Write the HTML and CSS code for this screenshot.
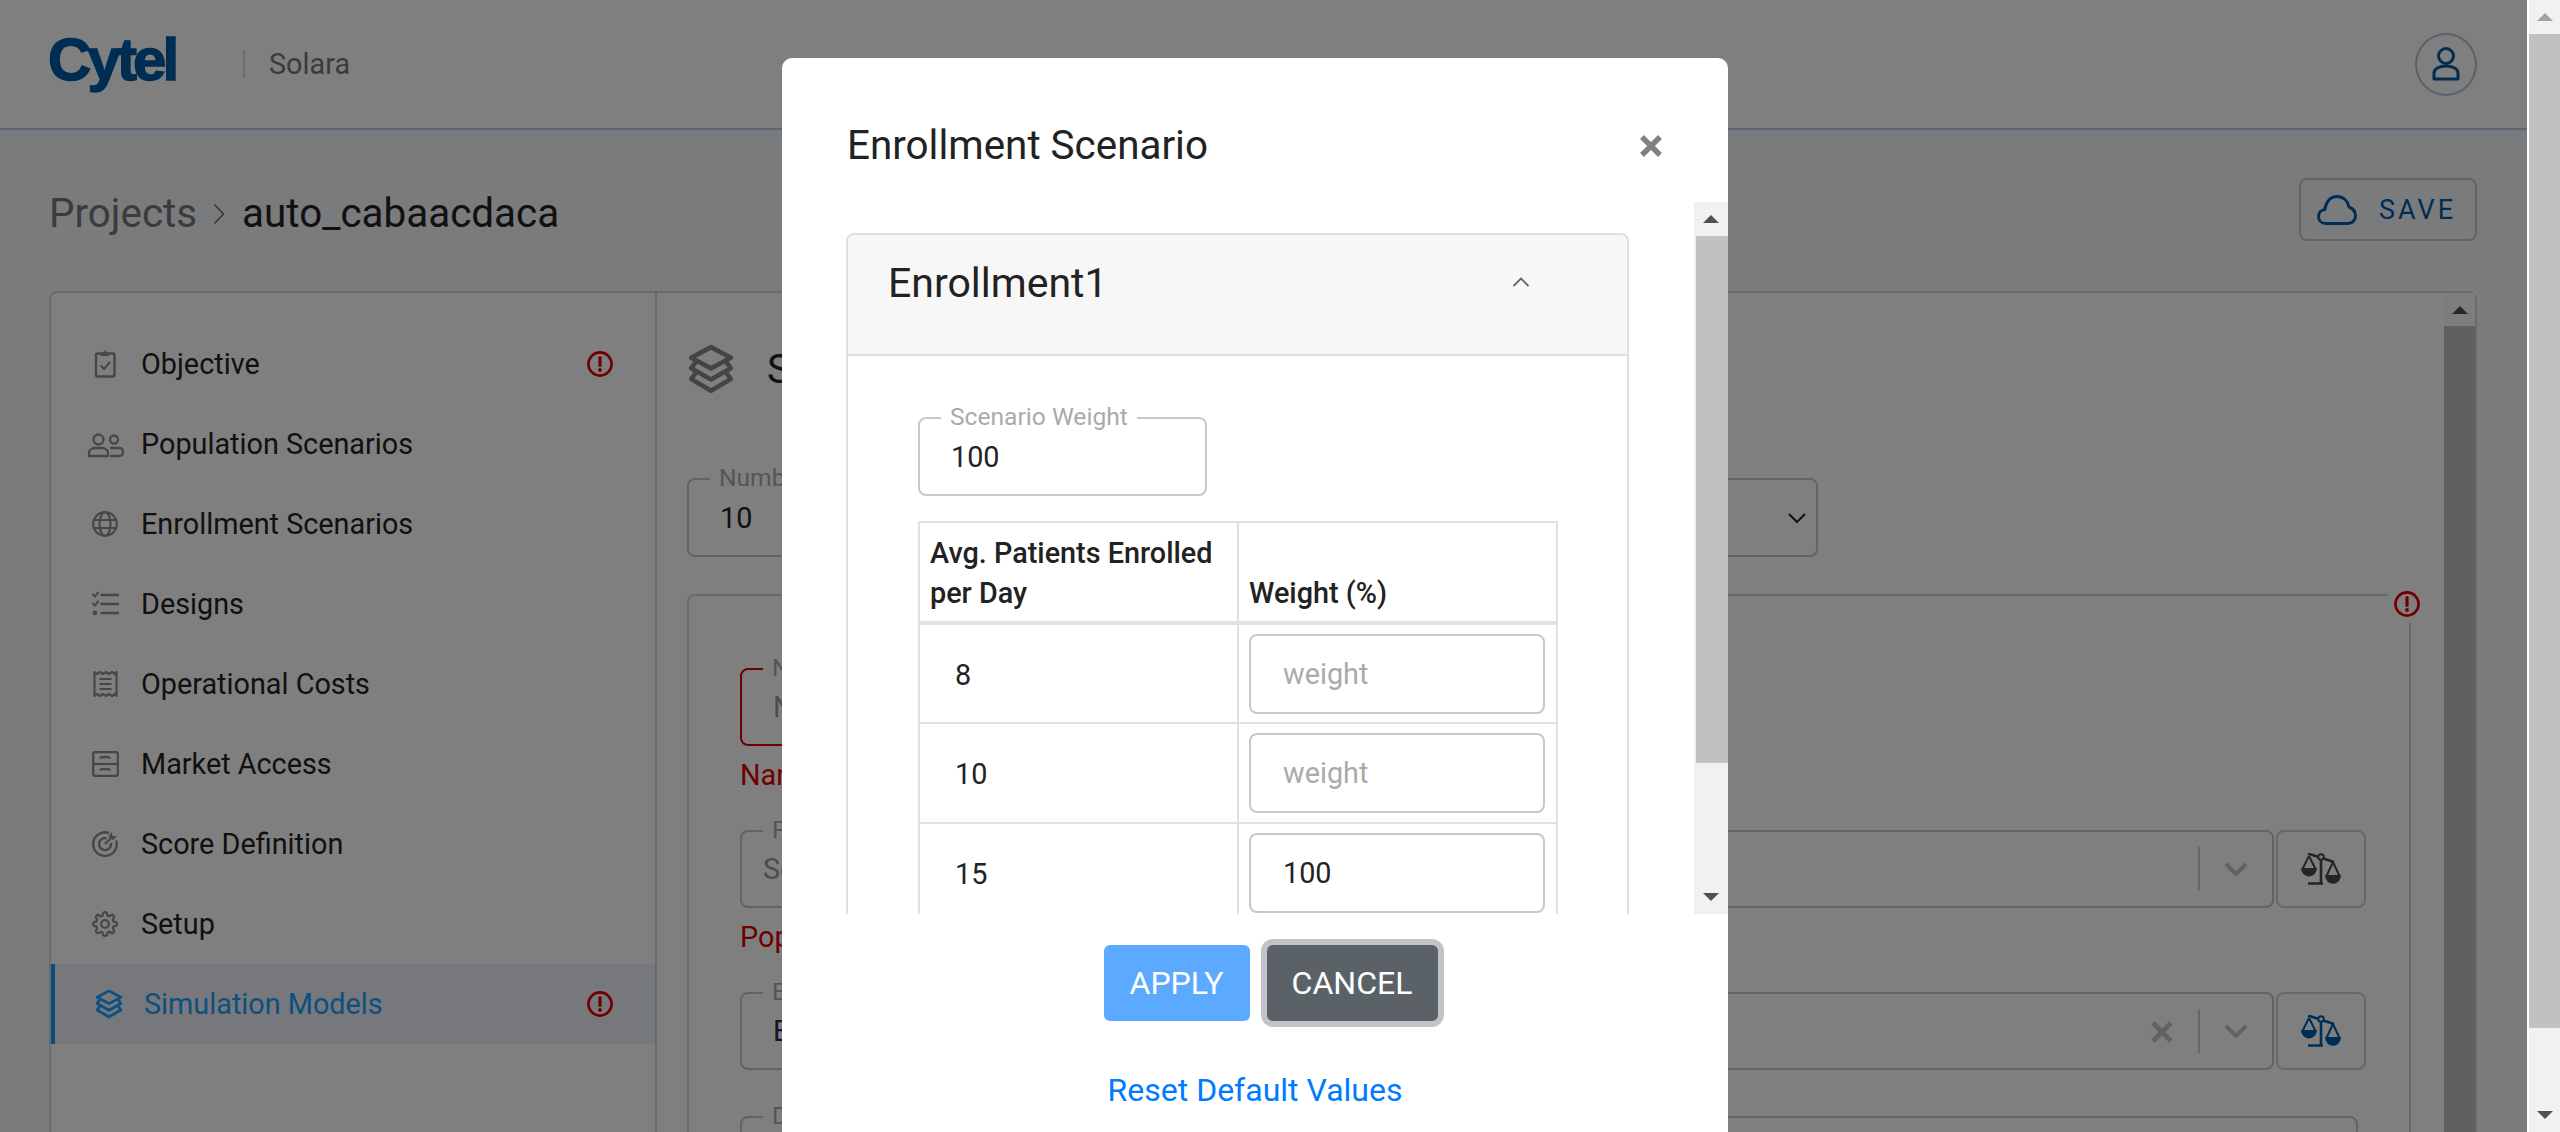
FILE: index.html
```html
<!DOCTYPE html>
<html>
<head>
<meta charset="UTF-8">
<title>Solara</title>
<link rel="stylesheet" href="styles.css">
</head>
<body>

<svg class="sprites" width="0" height="0">
	<symbol id="i-alert" viewBox="0 0 26 26">
		<circle cx="13" cy="13" r="11.6" fill="none" stroke="currentColor" stroke-width="2.6"/>
		<path d="M13 6.5v8" fill="none" stroke="currentColor" stroke-width="3.2" stroke-linecap="round"/>
		<circle cx="13" cy="19" r="1.9" fill="currentColor"/>
	</symbol>
	<symbol id="i-stack" viewBox="0 0 24 24">
		<g fill="none" stroke="currentColor" stroke-width="2.2" stroke-linejoin="round" stroke-linecap="round">
			<path d="M12 1.5 21.5 6.6 12 11.7 2.5 6.6Z"/>
			<path d="M5 8.2 2.5 11.6 12 17 21.5 11.6 19 8.2"/>
			<path d="M5 13.4 2.5 16.8 12 22.4 21.5 16.8 19 13.4"/>
		</g>
	</symbol>
	<symbol id="i-scale" viewBox="0 0 40 32">
		<g fill="none" stroke="currentColor" stroke-width="2">
			<path d="M20 5V30M7 30.5H22" stroke-width="2.6"/>
			<path d="M7 .5 33 9" stroke-width="2.6"/>
			<circle cx="20" cy="4" r="2.8" fill="#fff"/>
			<path d="M8 3 1.5 16M8 3 14.5 16"/>
			<path d="M32 9 25.5 23M32 9 38.5 23"/>
		</g>
		<path d="M0 15H16A8 8.5 0 0 1 0 15Z" fill="currentColor"/>
		<path d="M24 22H40A8 8.8 0 0 1 24 22Z" fill="currentColor"/>
	</symbol>
	<symbol id="i-chev" viewBox="0 0 24 14">
		<path d="M2 2 12 12 22 2" fill="none" stroke="currentColor" stroke-width="4"/>
	</symbol>
	<symbol id="i-x" viewBox="0 0 20 20">
		<path d="M2.5 2.5 17.5 17.5M17.5 2.5 2.5 17.5" fill="none" stroke="currentColor" stroke-width="4.2"/>
	</symbol>
</svg>

<div class="page">

	<header class="topbar">
		<span class="logo">Cytel</span>
		<span class="app-name">Solara</span>
		<span class="avatar">
			<svg viewBox="0 0 28 34" width="28" height="34">
				<circle cx="14" cy="9" r="7.5" fill="none" stroke="currentColor" stroke-width="3"/>
				<path d="M2 32V26C2 22 7 19 14 19S26 22 26 26V32Z" fill="none" stroke="currentColor" stroke-width="3" stroke-linejoin="round"/>
			</svg>
		</span>
	</header>

	<div class="crumbs">
		<span class="crumb-root">Projects</span>
		<svg class="crumb-sep" viewBox="0 0 12 22" width="12" height="22"><path d="M1.5 1.5 10.5 11 1.5 20.5" fill="none" stroke="currentColor" stroke-width="1.8"/></svg>
		<span class="crumb-name">auto_cabaacdaca</span>
		<button class="save-btn">
			<svg viewBox="0 0 40 30" width="40" height="30"><path d="M9 28.5C4 28.5 1.5 25 1.5 21.5S4 15 8 14.5C8.5 7 13.5 1.5 20 1.5S31 6 32 12C36 13.5 38.5 17 38.5 21S35.5 28.5 31 28.5Z" fill="none" stroke="currentColor" stroke-width="3" stroke-linejoin="round"/></svg>
			<span>SAVE</span>
		</button>
	</div>

	<div class="panel">
		<nav class="sidenav">
			<a class="nav-item">
				<svg class="nav-icon" viewBox="0 0 26 26">
					<rect x="4" y="2.5" width="18.5" height="23" rx="1.5" fill="none" stroke="currentColor" stroke-width="2.4"/>
					<path d="M9 5V1.5H11L13 -1 15 1.5H17V5Z" fill="currentColor"/>
					<path d="M8.5 14.5 12 18 18 11" fill="none" stroke="currentColor" stroke-width="2.2"/>
				</svg>
				<span>Objective</span>
				<svg class="nav-alert"><use href="#i-alert"/></svg>
			</a>
			<a class="nav-item">
				<svg class="nav-icon" viewBox="0 0 26 26">
					<g fill="none" stroke="currentColor" stroke-width="2.3">
						<circle cx="6.5" cy="8.5" r="5"/>
						<path d="M-3 25V22C-3 19 0 17 3 17H10C13 17 16 19 16 22V25Z" stroke-linejoin="round"/>
						<circle cx="22" cy="8.5" r="4"/>
						<path d="M18 17H27C30 17 31 19 31 21S30 25 27 25H18"/>
					</g>
				</svg>
				<span>Population Scenarios</span>
			</a>
			<a class="nav-item">
				<svg class="nav-icon" viewBox="0 0 26 26">
					<g fill="none" stroke="currentColor" stroke-width="2.2">
						<circle cx="13" cy="13" r="11.8"/>
						<ellipse cx="13" cy="13" rx="5.5" ry="11.8"/>
						<path d="M2 9H24M2 17H24"/>
					</g>
				</svg>
				<span>Enrollment Scenarios</span>
			</a>
			<a class="nav-item">
				<svg class="nav-icon" viewBox="0 0 26 26">
					<g fill="none" stroke="currentColor" stroke-width="2.3">
						<path d="M8.5 4H27M8.5 13H27M8.5 22H27"/>
						<path d="M.5 3 3 5.5 6.5 .8M.5 12 3 14.5 6.5 9.8" stroke-width="2"/>
					</g>
					<circle cx="3" cy="22" r="2.4" fill="currentColor"/>
				</svg>
				<span>Designs</span>
			</a>
			<a class="nav-item">
				<svg class="nav-icon" viewBox="0 0 26 26">
					<g fill="none" stroke="currentColor" stroke-width="2.2">
						<path d="M2.5 1 5 3 8 1 11 3 14 1 17 3 20 1 23 3 24.5 1V25L23 23 20 25 17 23 14 25 11 23 8 25 5 23 2.5 25Z" stroke-linejoin="round"/>
						<path d="M7.5 8H19.5M7.5 13H19.5M7.5 18H19.5"/>
					</g>
				</svg>
				<span>Operational Costs</span>
			</a>
			<a class="nav-item">
				<svg class="nav-icon" viewBox="0 0 26 26">
					<g fill="none" stroke="currentColor" stroke-width="2.3">
						<rect x="1.2" y="1.2" width="24.6" height="23.6" rx="1.5"/>
						<path d="M1 13H25"/>
						<path d="M8 7.5C8 5.5 18 5.5 18 7.5M8 19.5C8 17.5 18 17.5 18 19.5"/>
					</g>
				</svg>
				<span>Market Access</span>
			</a>
			<a class="nav-item">
				<svg class="nav-icon" viewBox="0 0 26 26">
					<g fill="none" stroke="currentColor" stroke-width="2.4">
						<path d="M17 2A11.8 11.8 0 1 0 24.2 9.5"/>
						<path d="M14.5 7.3A6 6 0 1 0 19 12"/>
						<path d="M13 13 19 7" stroke-width="2.2"/>
					</g>
					<path d="M16.5 5.5 19.5 1 20.5 5 25 5.5 21 9Z" fill="currentColor"/>
				</svg>
				<span>Score Definition</span>
			</a>
			<a class="nav-item">
				<svg class="nav-icon" viewBox="0 0 24 24">
					<g fill="none" stroke="currentColor" stroke-width="2.1">
						<circle cx="12" cy="12" r="3.6"/>
						<path d="M19.4 15a1.65 1.65 0 0 0 .33 1.82l.06.06a2 2 0 0 1 0 2.83 2 2 0 0 1-2.83 0l-.06-.06a1.65 1.65 0 0 0-1.82-.33 1.65 1.65 0 0 0-1 1.51V21a2 2 0 0 1-2 2 2 2 0 0 1-2-2v-.09A1.65 1.65 0 0 0 9 19.4a1.65 1.65 0 0 0-1.82.33l-.06.06a2 2 0 0 1-2.83 0 2 2 0 0 1 0-2.83l.06-.06a1.65 1.65 0 0 0 .33-1.82 1.65 1.65 0 0 0-1.51-1H3a2 2 0 0 1-2-2 2 2 0 0 1 2-2h.09A1.65 1.65 0 0 0 4.6 9a1.65 1.65 0 0 0-.33-1.82l-.06-.06a2 2 0 0 1 0-2.83 2 2 0 0 1 2.83 0l.06.06a1.65 1.65 0 0 0 1.82.33H9a1.65 1.65 0 0 0 1-1.51V3a2 2 0 0 1 2-2 2 2 0 0 1 2 2v.09a1.65 1.65 0 0 0 1 1.51 1.65 1.65 0 0 0 1.82-.33l.06-.06a2 2 0 0 1 2.83 0 2 2 0 0 1 0 2.83l-.06.06a1.65 1.65 0 0 0-.33 1.82V9a1.65 1.65 0 0 0 1.51 1H21a2 2 0 0 1 2 2 2 2 0 0 1-2 2h-.09a1.65 1.65 0 0 0-1.51 1z"/>
					</g>
				</svg>
				<span>Setup</span>
			</a>
			<a class="nav-item nav-active">
				<svg class="nav-icon"><use href="#i-stack"/></svg>
				<span>Simulation Models</span>
				<svg class="nav-alert"><use href="#i-alert"/></svg>
			</a>
		</nav>

		<main class="content">
			<div class="content-title">
				<svg class="title-icon"><use href="#i-stack"/></svg>
				<h2>Simulation Models</h2>
			</div>

			<div class="top-fields">
				<div class="field field-number">
					<label class="field-label">Number of Simulations</label>
					<span class="field-value">10</span>
				</div>
				<div class="field field-native">
					<label class="field-label">Simulation Type</label>
					<svg class="native-chev" viewBox="0 0 18 10" width="18" height="10"><path d="M1 1 9 9 17 1" fill="none" stroke="currentColor" stroke-width="2"/></svg>
				</div>
			</div>

			<section class="card">
				<svg class="card-alert"><use href="#i-alert"/></svg>

				<div class="field field-name field-error">
					<label class="field-label">Name</label>
					<span class="field-value field-hint">Name</span>
				</div>
				<p class="error-text">Name is required</p>

				<div class="form-row">
					<div class="field">
						<label class="field-label">Population Scenario</label>
						<span class="field-value field-select-text">Select...</span>
						<span class="select-tools">
							<svg class="tool-chev"><use href="#i-chev"/></svg>
						</span>
					</div>
					<button class="compare-btn"><svg class="scale-icon"><use href="#i-scale"/></svg></button>
				</div>
				<p class="error-text">Population Scenario is required</p>

				<div class="form-row">
					<div class="field">
						<label class="field-label">Enrollment Scenario</label>
						<span class="field-value field-chosen">Enrollment1</span>
						<svg class="tool-x"><use href="#i-x"/></svg>
						<span class="select-tools">
							<svg class="tool-chev"><use href="#i-chev"/></svg>
						</span>
					</div>
					<button class="compare-btn compare-on"><svg class="scale-icon"><use href="#i-scale"/></svg></button>
				</div>

				<div class="field field-last">
					<label class="field-label">Design</label>
				</div>
			</section>
		</main>

		<div class="panel-scroll">
			<span class="panel-scroll-btn"><i class="arrow-up"></i></span>
			<span class="panel-scroll-thumb"></span>
		</div>
	</div>

	<div class="overlay"></div>

	<div class="modal">
		<div class="modal-head">
			<h3>Enrollment Scenario</h3>
			<svg class="modal-close" viewBox="0 0 24 24" width="24" height="24"><path d="M3 3 21 21M21 3 3 21" fill="none" stroke="currentColor" stroke-width="5.4"/></svg>
		</div>

		<div class="modal-body">
			<div class="modal-scroll">
				<div class="accordion">
					<div class="accordion-head">
						<span>Enrollment1</span>
						<svg viewBox="0 0 18 10" width="18" height="10"><path d="M1.5 9 9 1.5 16.5 9" fill="none" stroke="currentColor" stroke-width="1.8"/></svg>
					</div>
					<div class="accordion-body">
						<div class="field field-weight">
							<label class="field-label">Scenario Weight</label>
							<input class="bare-input" type="text" value="100">
						</div>
						<table class="weights">
							<thead>
								<tr><th class="col-rate">Avg. Patients Enrolled per Day</th><th>Weight (%)</th></tr>
							</thead>
							<tbody>
								<tr><td class="rate">8</td><td><input class="weight-input" type="text" placeholder="weight"></td></tr>
								<tr><td class="rate">10</td><td><input class="weight-input" type="text" placeholder="weight"></td></tr>
								<tr><td class="rate">15</td><td><input class="weight-input" type="text" value="100"></td></tr>
							</tbody>
						</table>
					</div>
				</div>
			</div>
			<div class="modal-scrollbar">
				<span class="scroll-btn"><i class="arrow-up"></i></span>
				<span class="scroll-thumb"></span>
				<span class="scroll-rest"></span>
				<span class="scroll-btn"><i class="arrow-down"></i></span>
			</div>
		</div>

		<div class="modal-foot">
			<div class="modal-actions">
				<button class="btn btn-apply">APPLY</button>
				<button class="btn btn-cancel">CANCEL</button>
			</div>
			<a class="reset-link">Reset Default Values</a>
		</div>
	</div>
</div>

<div class="page-scroll">
	<span class="page-scroll-btn"><i class="arrow-up arrow-off"></i></span>
	<span class="page-scroll-thumb"></span>
	<span class="scroll-rest"></span>
	<span class="page-scroll-btn"><i class="arrow-down"></i></span>
</div>

</body>
</html>
```

FILE: styles.css
```css
*
{
	box-sizing: border-box;
}

html, body
{
	margin: 0;
	height: 100%;
	overflow: hidden;
}

body
{
	display: flex;
	width: 2560px;
	height: 1132px;
	font-family: Roboto, "Liberation Sans", sans-serif;
	color: #222222;
	background-color: #ffffff;
}

h2, h3, p
{
	margin: 0;
	font-weight: 400;
}

button
{
	font-family: inherit;
}

.sprites
{
	position: absolute;
}

.page
{
	position: relative;
	width: 2527px;
	height: 1132px;
	display: flex;
	flex-direction: column;
	overflow: hidden;
	background-color: #f5f6f9;
}

.overlay
{
	position: absolute;
	inset: 0;
	background-color: rgba(0, 0, 0, 0.5);
}

/* header */

.topbar
{
	flex: none;
	height: 130px;
	display: flex;
	align-items: center;
	padding: 0 50px 0 48px;
	background-color: #ffffff;
	border-bottom: 2px solid #b5cde6;
}

.logo
{
	width: 127px;
	margin-top: -8px;
	font-family: "Liberation Sans", sans-serif;
	font-weight: 700;
	font-size: 60px;
	line-height: 70px;
	letter-spacing: -3.9px;
	color: #005aa8;
	-webkit-text-stroke: 1.5px #005aa8;
}

.app-name
{
	margin-left: 68px;
	padding-left: 24px;
	font-size: 28.8px;
	color: #777777;
	line-height: 28px;
	border-left: 2px solid #d8d8d8;
}

.avatar
{
	margin-left: auto;
	width: 62px;
	height: 63px;
	display: flex;
	align-items: center;
	justify-content: center;
	border: 2px solid #b0c4dc;
	border-radius: 50%;
	color: #005aa8;
}

/* breadcrumb row */

.crumbs
{
	flex: none;
	height: 63px;
	margin: 48px 50px 50px 49px;
	display: flex;
	align-items: center;
}

.crumb-root
{
	margin-top: 8px;
	font-size: 40.4px;
	color: #777777;
}

.crumb-sep
{
	margin: 8px 17px 0 16px;
	color: #777777;
}

.crumb-name
{
	margin-top: 8px;
	font-size: 40.4px;
	color: #222222;
}

.save-btn
{
	margin-left: auto;
	width: 178px;
	height: 63px;
	display: flex;
	align-items: center;
	gap: 22px;
	padding: 0 0 0 16px;
	background: transparent;
	border: 2px solid #c4c8cf;
	border-radius: 8px;
	color: #005aa8;
	font-size: 27px;
	letter-spacing: 3px;
}

/* panel with side nav */

.panel
{
	flex: 1;
	min-height: 0;
	margin: 0 50px 0 49px;
	display: flex;
	background-color: #ffffff;
	border: 2px solid #d5d7dc;
	border-bottom: none;
	border-radius: 8px 8px 0 0;
}

.sidenav
{
	flex: none;
	width: 606px;
	padding-top: 31px;
	border-right: 2px solid #c5d4e6;
}

.nav-item
{
	height: 80px;
	display: flex;
	align-items: center;
	padding-left: 41px;
	font-size: 28.8px;
	color: #222222;
}

.nav-icon
{
	flex: none;
	width: 26px;
	height: 26px;
	margin-right: 23px;
	overflow: visible;
	color: #8e8e8e;
}

.nav-alert
{
	flex: none;
	width: 26px;
	height: 26px;
	margin-left: auto;
	margin-right: 42px;
	color: #e00000;
}

.nav-active
{
	padding-left: 41px;
	border-left: 4px solid #149cff;
	background-color: #ecf0f6;
	color: #1a9eff;
}

.nav-active .nav-icon
{
	color: #1a9eff;
	width: 30px;
	height: 30px;
	margin-left: -2px;
	margin-right: 20px;
}

.content
{
	flex: 1;
	min-width: 0;
	padding: 52px 0 0 30px;
	overflow: hidden;
}

.content-title
{
	height: 48px;
	display: flex;
	align-items: center;
	gap: 31px;
}

.title-icon
{
	width: 50px;
	height: 50px;
	margin-left: -1px;
	color: #888888;
}

.content-title h2
{
	font-size: 40.4px;
}

.top-fields
{
	display: flex;
	gap: 10px;
	margin-top: 85px;
	padding-right: 626px;
}

/* outlined fields */

.field
{
	position: relative;
	flex: 1;
	height: 78px;
	display: flex;
	align-items: center;
	background-color: #ffffff;
	border: 2px solid #c6c6c6;
	border-radius: 8px;
	font-size: 28.8px;
}

.field-label
{
	position: absolute;
	top: -16px;
	left: 21px;
	padding: 0 9px;
	background-color: #ffffff;
	font-size: 24.6px;
	line-height: 28px;
	color: #aaaaaa;
	white-space: nowrap;
}

.field-value
{
	padding-left: 31px;
}

.field-number
{
	flex: none;
	width: 330px;
	height: 79px;
}

.field-native
{
	height: 79px;
	justify-content: flex-end;
	padding-right: 10px;
}

.native-chev
{
	color: #222222;
}

.card
{
	position: relative;
	width: 1724px;
	height: 700px;
	margin-top: 37px;
	padding: 72px 43px 0 51px;
	border: 2px solid #d3d3d3;
	border-radius: 8px;
}

.card-alert
{
	position: absolute;
	top: -11px;
	right: -17px;
	width: 38px;
	height: 38px;
	padding: 6px;
	background-color: #ffffff;
	color: #e00000;
}

.field-name
{
	flex: none;
	width: 800px;
}

.field-error
{
	border-color: #de0000;
}

.field-hint, .field-select-text
{
	color: #999999;
}

.field-select-text
{
	padding-left: 21px;
}

.field-chosen
{
	color: #222a55;
}

.error-text
{
	height: 84px;
	padding-top: 14px;
	font-size: 28.8px;
	line-height: 30px;
	color: #dc0000;
}

.form-row
{
	display: flex;
	gap: 2px;
}

.form-row .field
{
	flex: 1;
}

.select-tools
{
	position: absolute;
	right: 0;
	top: 15px;
	width: 74px;
	height: 44px;
	display: flex;
	align-items: center;
	justify-content: center;
	border-left: 2px solid #cccccc;
	color: #c4c4c4;
}

.tool-chev
{
	width: 24px;
	height: 14px;
}

.tool-x
{
	position: absolute;
	right: 98px;
	top: 26px;
	width: 24px;
	height: 24px;
	color: #c4c4c4;
}

.compare-btn
{
	flex: none;
	width: 90px;
	height: 78px;
	padding: 0;
	display: flex;
	align-items: center;
	justify-content: center;
	background: transparent;
	border: 2px solid #cad2db;
	border-radius: 8px;
	color: #4a4a4a;
}

.compare-on
{
	color: #005aa8;
}

.scale-icon
{
	width: 40px;
	height: 32px;
	overflow: visible;
}

.field-last
{
	width: 1618px;
	margin-top: 46px;
	flex: none;
}

/* inner page scrollbar */

.panel-scroll
{
	flex: none;
	width: 31px;
	display: flex;
	flex-direction: column;
	background-color: #ffffff;
}

.panel-scroll-btn
{
	flex: none;
	height: 33px;
	display: flex;
	align-items: center;
	justify-content: center;
	background-color: #fafafa;
}

.panel-scroll-thumb
{
	flex: 1;
	background-color: #c1c1c1;
}

/* modal */

.modal
{
	position: absolute;
	top: 58px;
	left: 782px;
	width: 946px;
	height: 1074px;
	background-color: #ffffff;
	border-radius: 10px 10px 0 0;
}

.modal-head
{
	height: 144px;
	padding: 32px 65px 0 65px;
	display: flex;
	align-items: flex-start;
	justify-content: space-between;
}

.modal-head h3
{
	height: 112px;
	font-size: 40.4px;
	line-height: 112px;
	color: #222222;
}

.modal-close
{
	margin-top: 44px;
	color: #808080;
}

.modal-body
{
	height: 712px;
	display: flex;
	overflow: hidden;
}

.modal-scroll
{
	flex: 1;
	min-width: 0;
	padding: 31px 0 0 64px;
	overflow: hidden;
}

.modal-scrollbar
{
	flex: none;
	width: 34px;
	display: flex;
	flex-direction: column;
	background-color: #f1f1f1;
}

.scroll-btn
{
	flex: none;
	height: 34px;
	display: flex;
	align-items: center;
	justify-content: center;
}

.scroll-thumb
{
	flex: none;
	height: 527px;
	margin-left: 2px;
	background-color: #c1c1c1;
}

.scroll-rest
{
	flex: 1;
}

.arrow-up, .arrow-down
{
	display: block;
	width: 0;
	height: 0;
	border-left: 8px solid transparent;
	border-right: 8px solid transparent;
}

.arrow-up
{
	border-bottom: 8px solid #505050;
}

.arrow-down
{
	border-top: 8px solid #505050;
}

.arrow-off
{
	border-bottom-color: #a3a3a3;
}

.accordion
{
	width: 783px;
	height: 900px;
	border: 2px solid #dfdfdf;
	border-radius: 8px 8px 0 0;
}

.accordion-head
{
	height: 121px;
	display: flex;
	justify-content: space-between;
	padding: 24px 97px 0 40px;
	font-size: 41px;
	line-height: 48px;
	background-color: #f7f7f7;
	border-bottom: 2px solid #dfdfdf;
	border-radius: 6px 6px 0 0;
	color: #222222;
}

.accordion-head svg
{
	margin-top: 18px;
	color: #666666;
}

.accordion-body
{
	padding: 61px 0 0 70px;
}

.field-weight
{
	width: 289px;
	height: 79px;
	flex: none;
	border-color: #c8c8c8;
}

.bare-input
{
	width: 100%;
	padding: 0 0 0 31px;
	border: none;
	background: transparent;
	outline: none;
	font: inherit;
	color: #222222;
}

.weights
{
	width: 640px;
	margin-top: 25px;
	border-collapse: collapse;
	table-layout: fixed;
	font-size: 28.8px;
}

.weights th, .weights td
{
	border: 2px solid #dee2e6;
	padding: 0 11px 0 10px;
}

.weights th
{
	height: 100px;
	padding-top: 10px;
	padding-bottom: 8px;
	line-height: 40px;
	font-weight: 500;
	text-align: left;
	vertical-align: bottom;
	border-bottom-width: 4px;
}

.col-rate
{
	width: 319px;
}

.weights td
{
	height: 100px;
}

.weights .rate
{
	padding-left: 35px;
	padding-top: 2px;
}

.weight-input
{
	display: block;
	width: 100%;
	height: 80px;
	padding: 0 0 0 32px;
	border: 2px solid #c8c8c8;
	border-radius: 8px;
	outline: none;
	font: inherit;
	color: #222222;
}

.weight-input::placeholder
{
	color: #aaaaaa;
	opacity: 1;
}

.modal-foot
{
	padding-top: 31px;
	text-align: center;
}

.modal-actions
{
	display: flex;
	justify-content: center;
	gap: 17px;
	padding-left: 31px;
}

.btn
{
	height: 76px;
	padding: 0;
	border: none;
	border-radius: 6px;
	color: #ffffff;
	font-size: 32px;
}

.btn-apply
{
	width: 146px;
	background-color: #5caaff;
}

.btn-cancel
{
	width: 171px;
	background-color: #5a6268;
	box-shadow: 0 0 0 6px #c0c4c8;
}

.reset-link
{
	display: block;
	margin-top: 50px;
	font-size: 32px;
	line-height: 38px;
	color: #007bff;
}

/* browser scrollbar */

.page-scroll
{
	flex: none;
	width: 33px;
	display: flex;
	flex-direction: column;
	background-color: #f1f1f1;
	border-left: 2px solid #ffffff;
}

.page-scroll-btn
{
	flex: none;
	height: 34px;
	display: flex;
	align-items: center;
	justify-content: center;
}

.page-scroll-thumb
{
	flex: none;
	height: 994px;
	background-color: #c1c1c1;
}
```
